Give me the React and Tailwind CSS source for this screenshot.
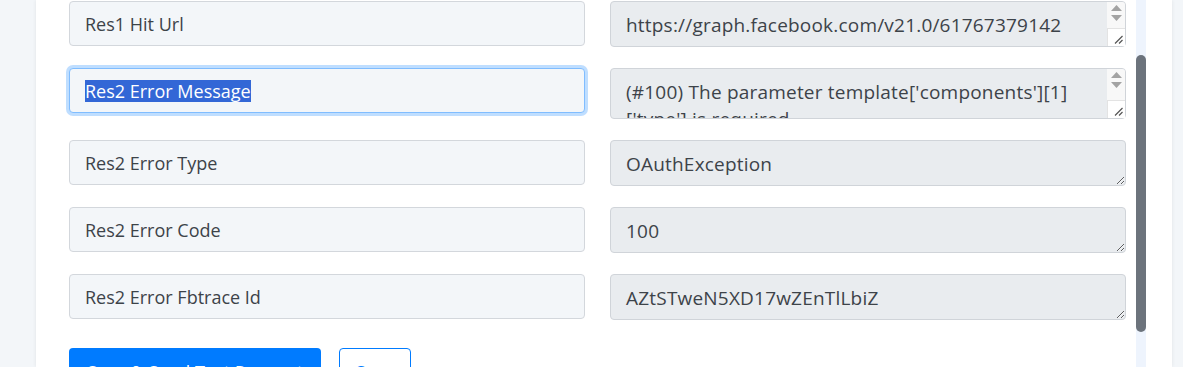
import React from "react";

const rows = [
  {
    label: "Res1 Hit Url",
    value: "https://graph.facebook.com/v21.0/617673791428836/messages",
    scroll: true,
    pad: "pr-[63px]",
  },
  {
    label: "Res2 Error Message",
    value: "(#100) The parameter template['components'][1] ['type'] is required.",
    focused: true,
    scroll: true,
    pad: "pr-[24px]",
  },
  { label: "Res2 Error Type", value: "OAuthException" },
  { label: "Res2 Error Code", value: "100" },
  { label: "Res2 Error Fbtrace Id", value: "AZtSTweN5XD17wZEnTlLbiZ" },
];

// fake classic scrollbar (arrows + resize corner) for overflowing textareas
function MiniScrollbar() {
  return (
    <div className="absolute right-[1px] top-[1px] bottom-[1px] w-[18px] bg-[#f8f8f8] flex flex-col rounded-tr-[3px] rounded-br-[3px]">
      <div className="flex-1 flex flex-col items-center pt-[3px] gap-[4px]">
        <svg width="11" height="6" viewBox="0 0 11 6">
          <path d="M5.5 0 L11 6 L0 6 Z" fill="#a3a3a3" />
        </svg>
        <svg width="11" height="6" viewBox="0 0 11 6">
          <path d="M0 0 L11 0 L5.5 6 Z" fill="#a3a3a3" />
        </svg>
      </div>
      <div className="h-[18px] border-l border-t border-[#e3e3e3] bg-white flex items-end justify-end pr-[2px] pb-[2px]">
        <svg width="9" height="9" viewBox="0 0 9 9">
          <path d="M8.5 1 L1 8.5 M8.5 5 L5 8.5" stroke="#555" strokeWidth="1.2" />
        </svg>
      </div>
    </div>
  );
}

function FieldRow({ row }) {
  return (
    <div className="grid grid-cols-[516px_516px] gap-x-[25px] items-start">
      {row.focused ? (
        <div className="h-[45px] rounded-[4px] border border-[#80bdff] bg-[#f3f6f9] px-[15px] flex items-center shadow-[0_0_0_3px_rgba(0,123,255,0.25)]">
          <span className="bg-[#3367d6] text-white leading-[22px]">{row.label}</span>
        </div>
      ) : (
        <input
          readOnly
          value={row.label}
          className="h-[45px] w-full rounded-[4px] border border-[#d3d7dc] bg-[#f3f6f9] px-[15px] text-[#3d4349] outline-none"
        />
      )}
      <div className="relative">
        <textarea
          readOnly
          value={row.value}
          className={`block w-full rounded-[4px] border border-[#d0d4d9] bg-[#e9ecef] pl-[15px] py-[10px] text-[19px] leading-[27px] tracking-[0.2px] text-[#3d4349] outline-none overflow-hidden ${
            row.focused ? "h-[51px]" : "h-[46px]"
          } ${row.scroll ? "resize-none " + row.pad : "pr-[10px]"}`}
        />
        {row.scroll && <MiniScrollbar />}
      </div>
    </div>
  );
}

export default function App() {
  return (
    <div
      className="h-[367px] w-[1183px] overflow-hidden bg-[#f3f6f9] flex text-[18px]"
      style={{ fontFamily: "'Open Sans', sans-serif" }}
    >
      <div className="w-[36px] shrink-0" />
      <div className="w-[1136px] shrink-0 bg-white shadow-[0_0_4px_rgba(0,0,0,0.08)] flex">
        <div className="w-[1100px] shrink-0 pl-[33px] pt-[1px]">
          <div className="flex flex-col gap-[21px]">
            {rows.map((row) => (
              <FieldRow key={row.label} row={row} />
            ))}
          </div>
          <div className="mt-[28px] flex gap-[18px]">
            <button className="h-[46px] w-[252px] rounded-[4px] bg-[#007bff] text-white pt-[2px]">
              Save &amp; Send Test Request
            </button>
            <button className="h-[46px] w-[72px] rounded-[4px] border border-[#007bff] bg-white text-[#007bff] pt-[2px]">
              Save
            </button>
          </div>
        </div>
        <div className="w-[10px] shrink-0 bg-[#eef4fd] flex flex-col">
          <div className="mt-[55px] h-[277px] rounded-[5px] bg-[#6c737c]" />
        </div>
      </div>
    </div>
  );
}
